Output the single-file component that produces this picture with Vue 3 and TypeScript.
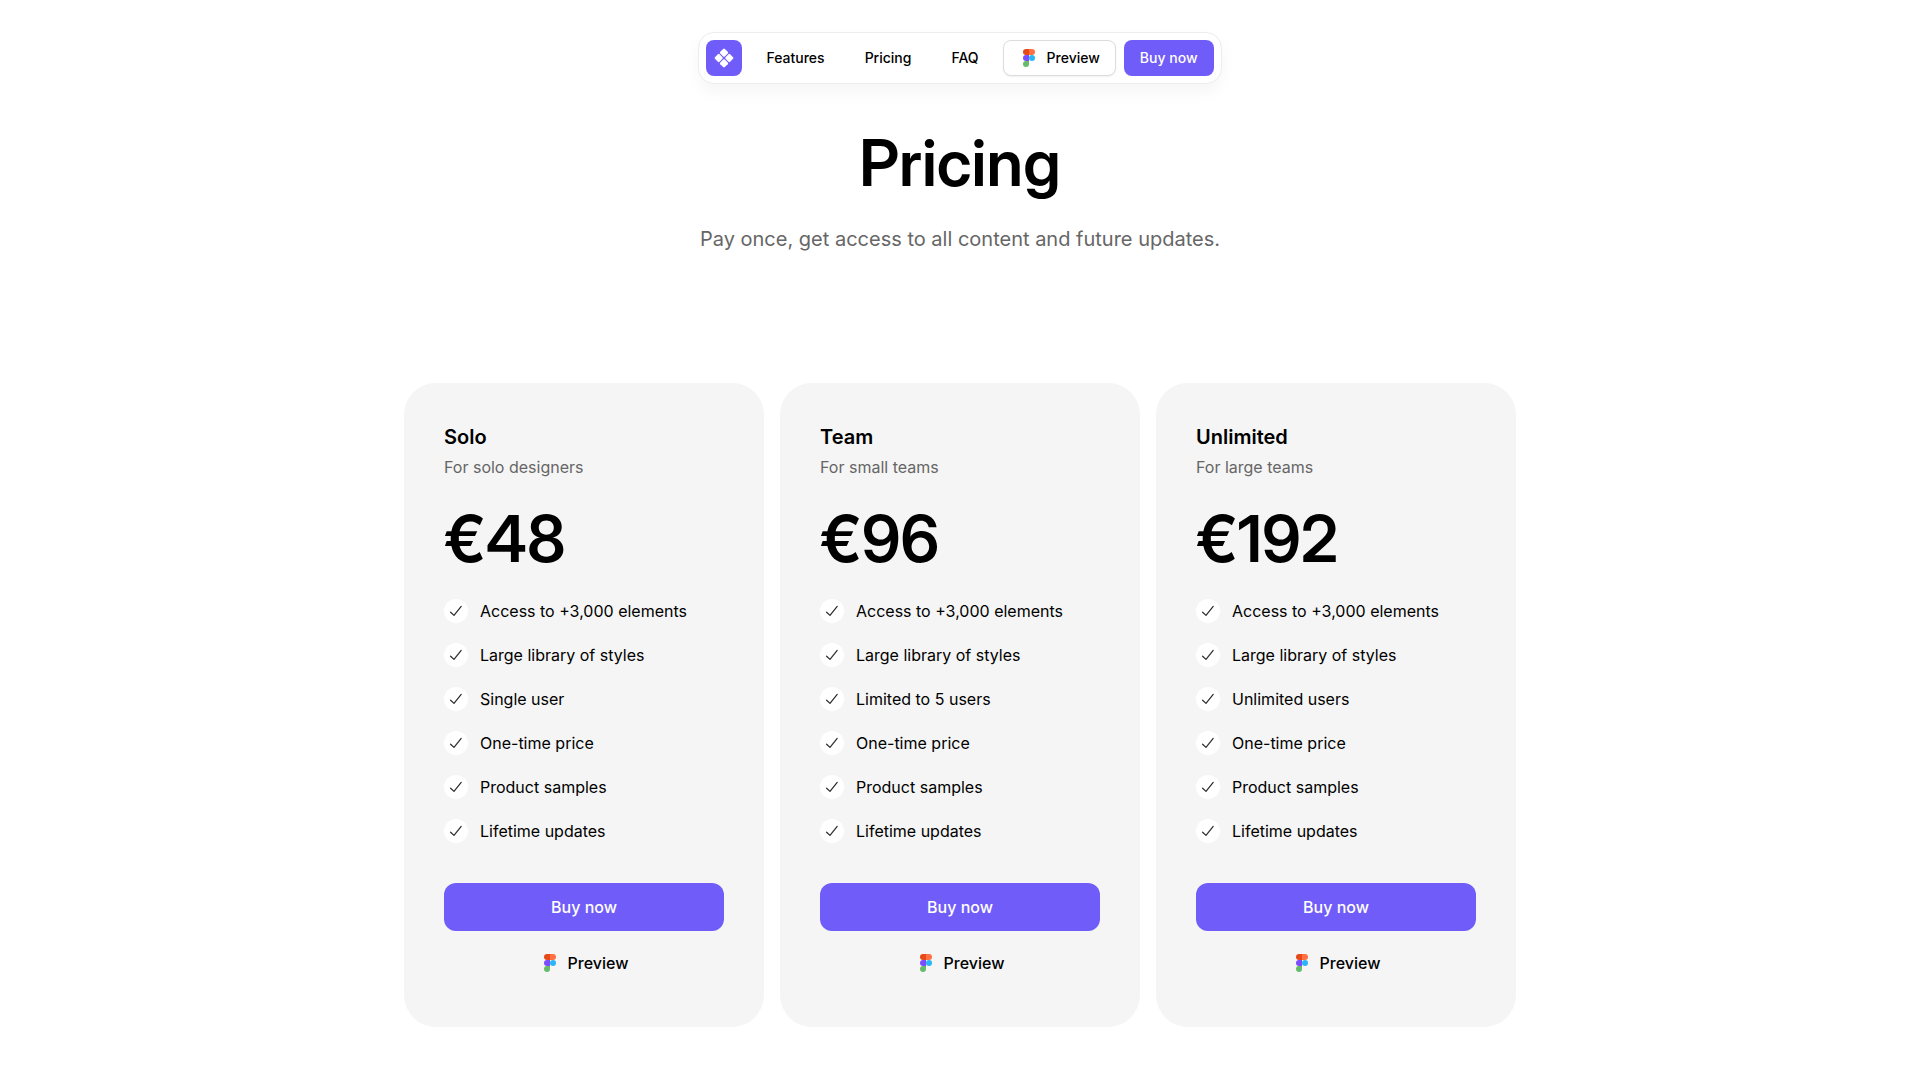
<script setup lang="ts">
import { defineComponent, h } from 'vue'

interface Plan {
  name: string
  audience: string
  price: string
  users: string
}

const plans: Plan[] = [
  { name: 'Solo', audience: 'For solo designers', price: '€48', users: 'Single user' },
  { name: 'Team', audience: 'For small teams', price: '€96', users: 'Limited to 5 users' },
  { name: 'Unlimited', audience: 'For large teams', price: '€192', users: 'Unlimited users' },
]

const featuresOf = (plan: Plan): string[] => [
  'Access to +3,000 elements',
  'Large library of styles',
  plan.users,
  'One-time price',
  'Product samples',
  'Lifetime updates',
]

const FigmaIcon = defineComponent({
  render: () =>
    h('svg', { width: 20, height: 20, viewBox: '0 0 20 20', 'aria-hidden': 'true' }, [
      h('path', { d: 'M10 1h3a3 3 0 0 1 0 6h-3z', fill: '#ff7043' }),
      h('path', { d: 'M10 1H7a3 3 0 0 0 0 6h3z', fill: '#e64a19' }),
      h('path', { d: 'M10 7H7a3 3 0 0 0 0 6h3z', fill: '#7c4dff' }),
      h('circle', { cx: 13, cy: 10, r: 3, fill: '#29b6f6' }),
      h('path', { d: 'M10 13H7a3 3 0 1 0 3 3z', fill: '#66bb6a' }),
    ]),
})
</script>

<template>
  <div class="page">
    <header class="header">
      <nav class="nav" aria-label="Main">
        <a class="logo" href="#" aria-label="Home">
          <svg width="20" height="20" viewBox="0 0 20 20" fill="#fff" aria-hidden="true">
            <g transform="rotate(45 10 10)">
              <rect x="3" y="3" width="6.5" height="6.5" rx="1.2" />
              <rect x="10.5" y="3" width="6.5" height="6.5" rx="1.2" />
              <rect x="3" y="10.5" width="6.5" height="6.5" rx="1.2" />
              <rect x="10.5" y="10.5" width="6.5" height="6.5" rx="1.2" />
            </g>
          </svg>
        </a>
        <div class="links">
          <a href="#features">Features</a>
          <a href="#pricing">Pricing</a>
          <a href="#faq">FAQ</a>
        </div>
        <div class="actions">
          <button type="button" class="btn small outline"><FigmaIcon />Preview</button>
          <button type="button" class="btn small primary">Buy now</button>
        </div>
      </nav>
    </header>

    <main id="pricing" class="main">
      <div class="intro">
        <h1>Pricing</h1>
        <p>Pay once, get access to all content and future updates.</p>
      </div>

      <div class="plans">
        <section v-for="plan in plans" :key="plan.name" class="plan">
          <h2>{{ plan.name }}</h2>
          <p class="audience">{{ plan.audience }}</p>
          <p class="price">{{ plan.price }}</p>
          <ul>
            <li v-for="feature in featuresOf(plan)" :key="feature">
              <span class="check">
                <svg width="24" height="24" viewBox="0 0 24 24" fill="none" aria-hidden="true">
                  <path d="M6.6 13.2 10 16.4 17.2 7.4" stroke="#2a2a2a" stroke-width="1.2" stroke-linecap="round" stroke-linejoin="round" />
                </svg>
              </span>
              {{ feature }}
            </li>
          </ul>
          <div class="buttons">
            <button type="button" class="btn primary">Buy now</button>
            <button type="button" class="btn plain"><FigmaIcon />Preview</button>
          </div>
        </section>
      </div>
    </main>
  </div>
</template>

<style>
body {
  background: #fff;
}
</style>

<style scoped>
.page {
  font-family: Inter, 'Liberation Sans', sans-serif;
  font-size: 16px;
  line-height: 24px;
  color: #000;
}

h1,
h2,
p,
ul {
  margin: 0;
  padding: 0;
}

.header {
  display: flex;
  justify-content: center;
  padding-top: 32px;
}

.nav {
  display: flex;
  align-items: center;
  gap: 4px;
  padding: 7px;
  border: 1px solid #ededed;
  border-radius: 16px;
  background: #fff;
  box-shadow: 0 8px 16px rgba(0, 0, 0, 0.04);
}

.logo {
  display: flex;
  align-items: center;
  justify-content: center;
  width: 36px;
  height: 36px;
  border-radius: 8px;
  background: #705cf8;
}

.links {
  display: flex;
}

.links a {
  padding: 0 20px;
  font-size: 14px;
  font-weight: 500;
  color: #000;
  text-decoration: none;
}

.actions {
  display: flex;
  gap: 8px;
}

.btn {
  display: flex;
  align-items: center;
  justify-content: center;
  gap: 8px;
  height: 48px;
  padding: 0 16px;
  border: 0;
  border-radius: 12px;
  background: none;
  font: inherit;
  font-weight: 500;
  color: #000;
  cursor: pointer;
}

.btn.small {
  height: 36px;
  border-radius: 8px;
  font-size: 14px;
}

.btn.outline {
  padding: 0 15px;
  border: 1px solid #dcdcdc;
  background: #fff;
  box-shadow: 0 1px 2px rgba(0, 0, 0, 0.06);
}

.btn.primary {
  background: #705cf8;
  color: #fff;
}

.main {
  padding: 43px 24px 53px;
}

.intro {
  text-align: center;
}

h1,
.price {
  font-family: 'Inter Display', Inter, 'Liberation Sans', sans-serif;
  font-size: 64px;
  line-height: 72px;
  font-weight: 600;
}

.intro p {
  margin-top: 24px;
  font-size: 20px;
  line-height: 32px;
  color: #666;
}

.plans {
  display: grid;
  grid-template-columns: repeat(3, 1fr);
  gap: 16px;
  max-width: 1112px;
  margin: 128px auto 0;
}

.plan {
  padding: 40px;
  border-radius: 32px;
  background: #f5f5f5;
}

h2 {
  font-size: 20px;
  line-height: 28px;
  font-weight: 600;
}

.audience {
  margin-top: 4px;
  color: #666;
}

.price {
  margin: 24px 0;
}

ul {
  display: flex;
  flex-direction: column;
  gap: 20px;
  list-style: none;
}

li {
  display: flex;
  align-items: center;
  gap: 12px;
}

.check {
  display: flex;
  border-radius: 50%;
  background: #fff;
}

.buttons {
  display: flex;
  flex-direction: column;
  gap: 8px;
  margin-top: 40px;
}
</style>
